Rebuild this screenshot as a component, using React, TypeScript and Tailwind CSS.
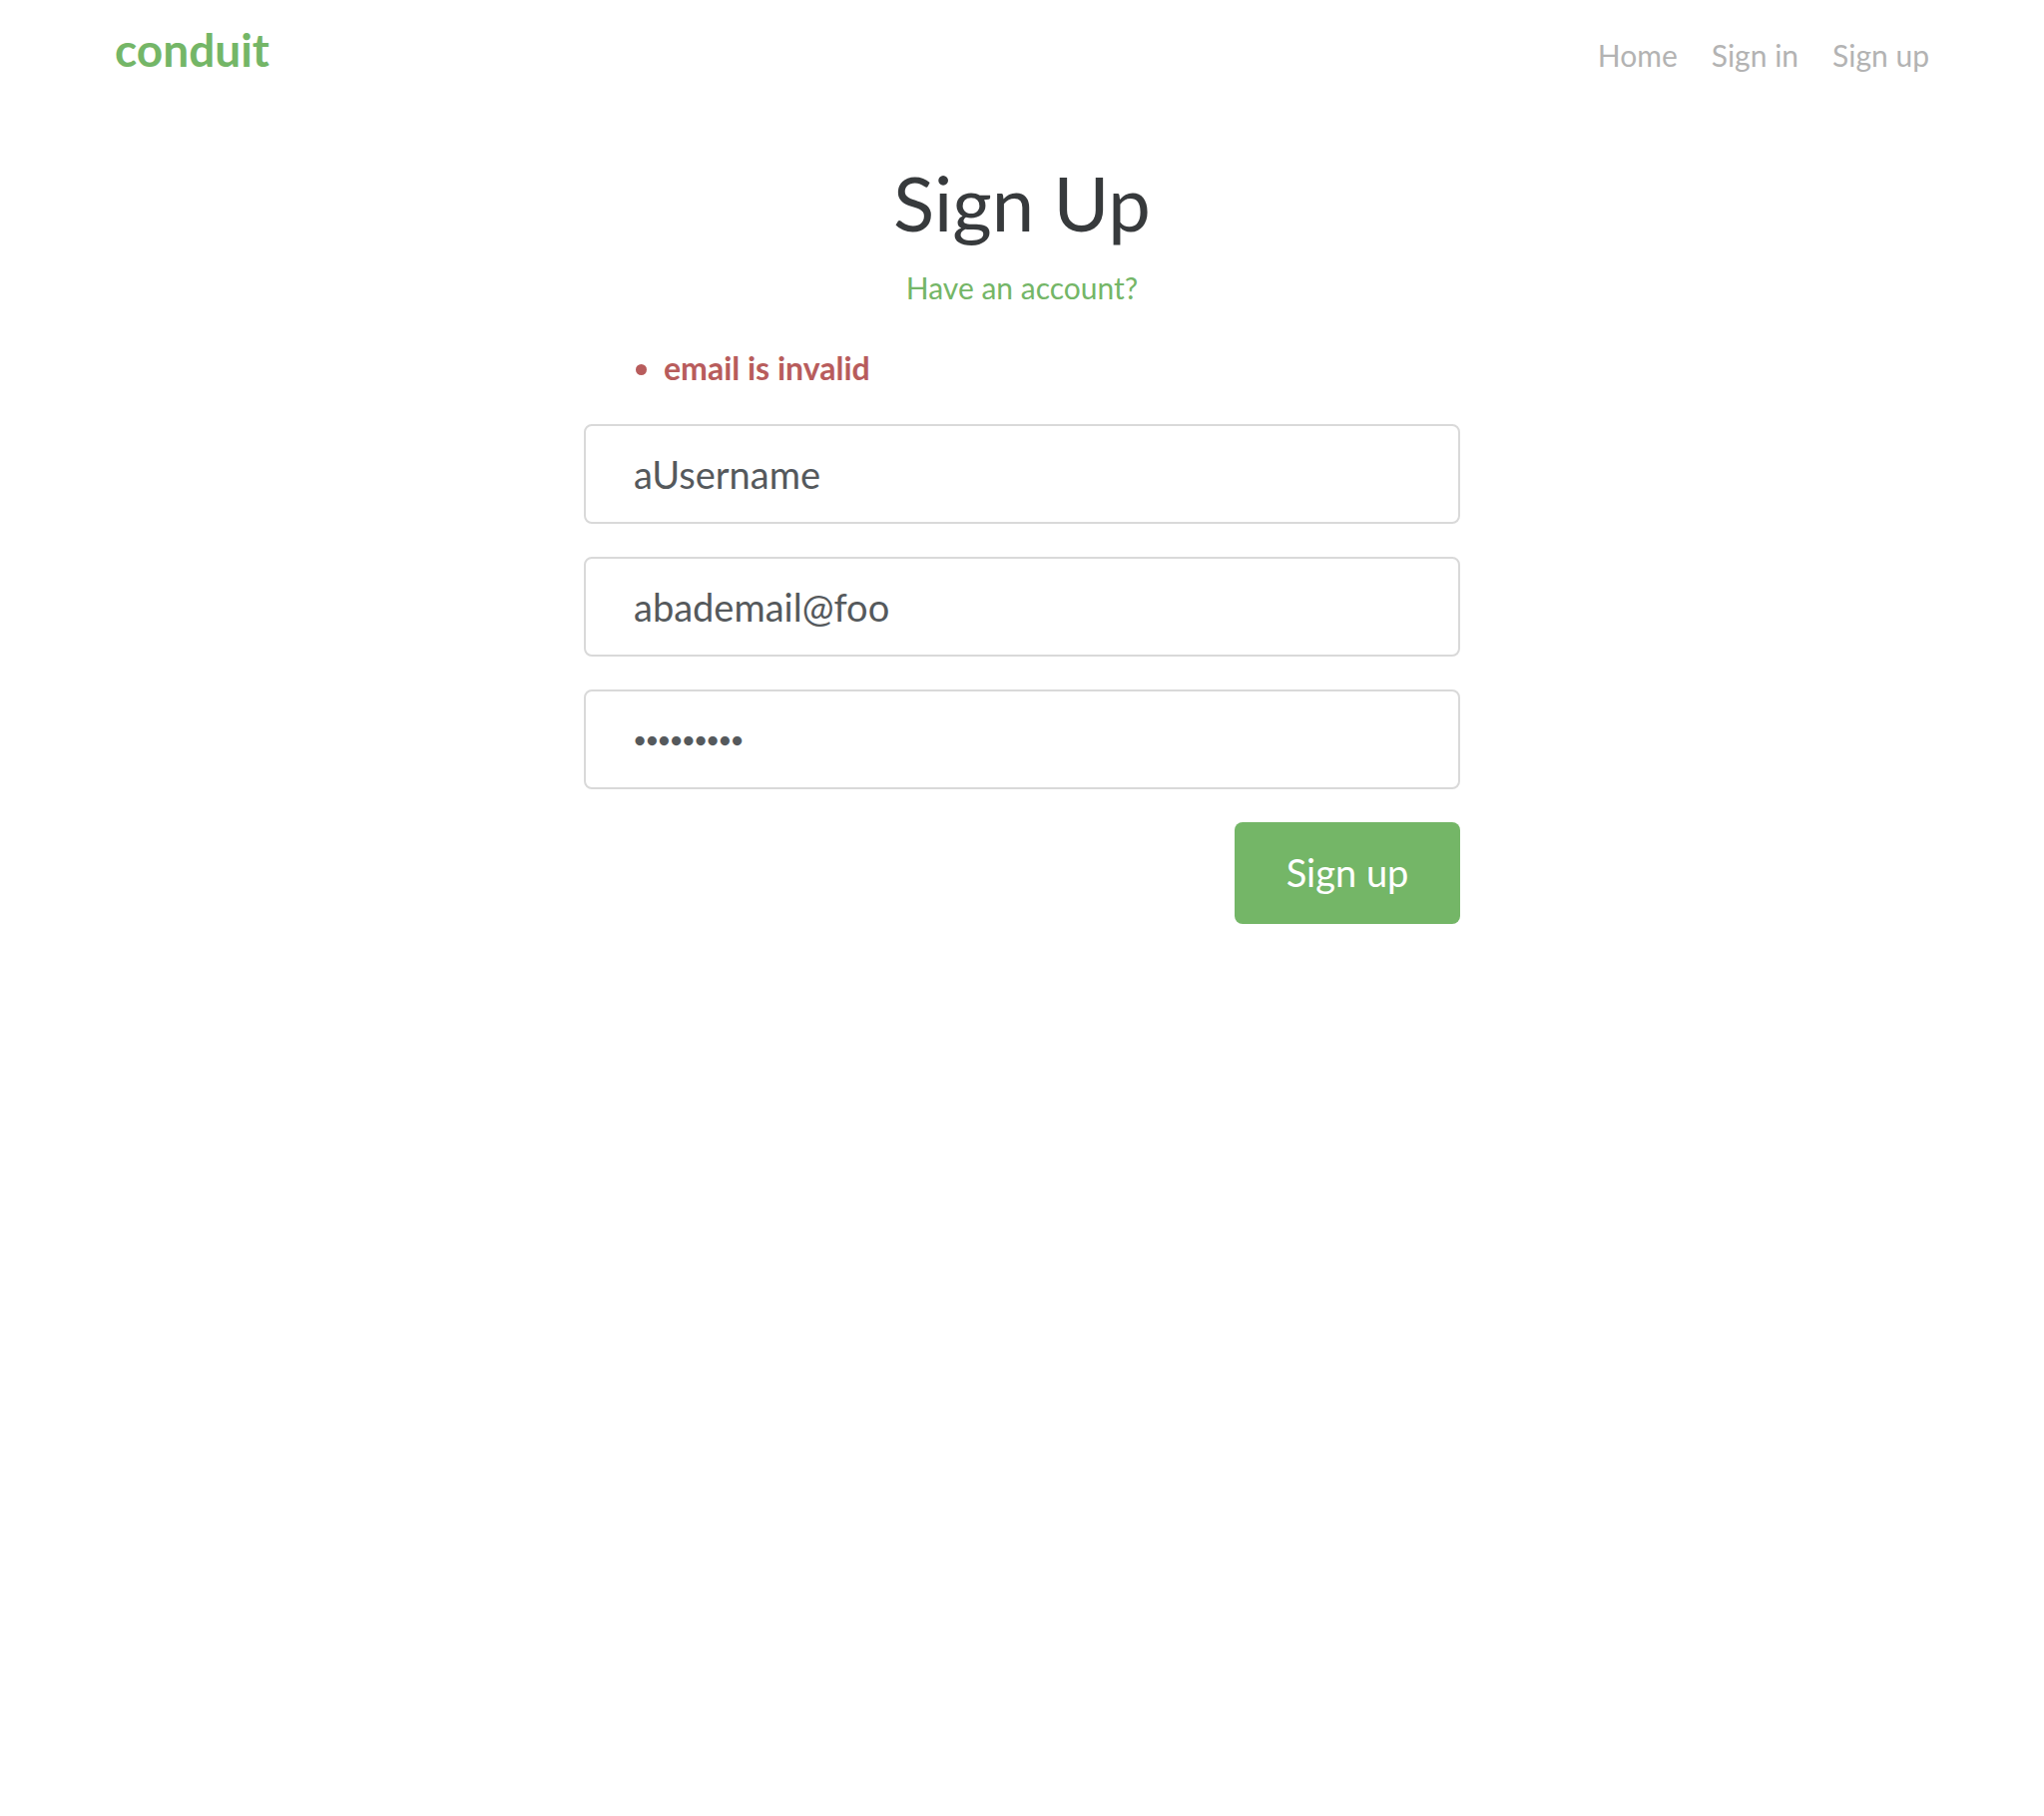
import React from "react";

const font = { fontFamily: "Lato, 'Noto Sans', sans-serif" };

const inputClass =
  "h-[100px] rounded-[8px] border-2 border-[#d9d9d9] px-[48px] text-[38px] text-[#55595c] outline-none";

function Header() {
  return (
    <nav className="flex items-baseline justify-between pl-[115px] pr-[115px] pt-[22px]">
      <a className="text-[46px] font-bold leading-[1.2] text-[#74b667]" href="#">
        conduit
      </a>
      <ul className="flex items-baseline gap-[34px] text-[30px] text-[#b3b3b3]">
        <li>Home</li>
        <li>Sign in</li>
        <li>Sign up</li>
      </ul>
    </nav>
  );
}

export default function App() {
  return (
    <div className="min-h-[1820px] bg-white" style={font}>
      <Header />
      <main className="mx-auto mt-[83px] w-[878px]">
        <h1 className="text-center text-[76px] leading-[1.1] text-[#373a3c]">Sign Up</h1>
        <p className="mt-[21px] text-center text-[30px] text-[#74b667]">Have an account?</p>
        <ul className="mt-[34px] list-disc pl-[80px] text-[32px] font-bold text-[#b85c5c] marker:text-[#b85c5c]">
          <li>email is invalid</li>
        </ul>
        <form className="mt-[32px] flex flex-col gap-[33px]">
          <input className={inputClass} defaultValue="aUsername" />
          <input className={inputClass} defaultValue="abademail@foo" />
          <input
            type="password"
            className="h-[100px] rounded-[8px] border-2 border-[#d9d9d9] px-[48px] text-[21px] font-bold text-[#55595c] outline-none"
            defaultValue="password1"
          />
          <div className="flex justify-end">
            <button
              type="button"
              className="h-[102px] w-[226px] rounded-[8px] bg-[#74b667] text-[38px] text-white"
            >
              Sign up
            </button>
          </div>
        </form>
      </main>
    </div>
  );
}
